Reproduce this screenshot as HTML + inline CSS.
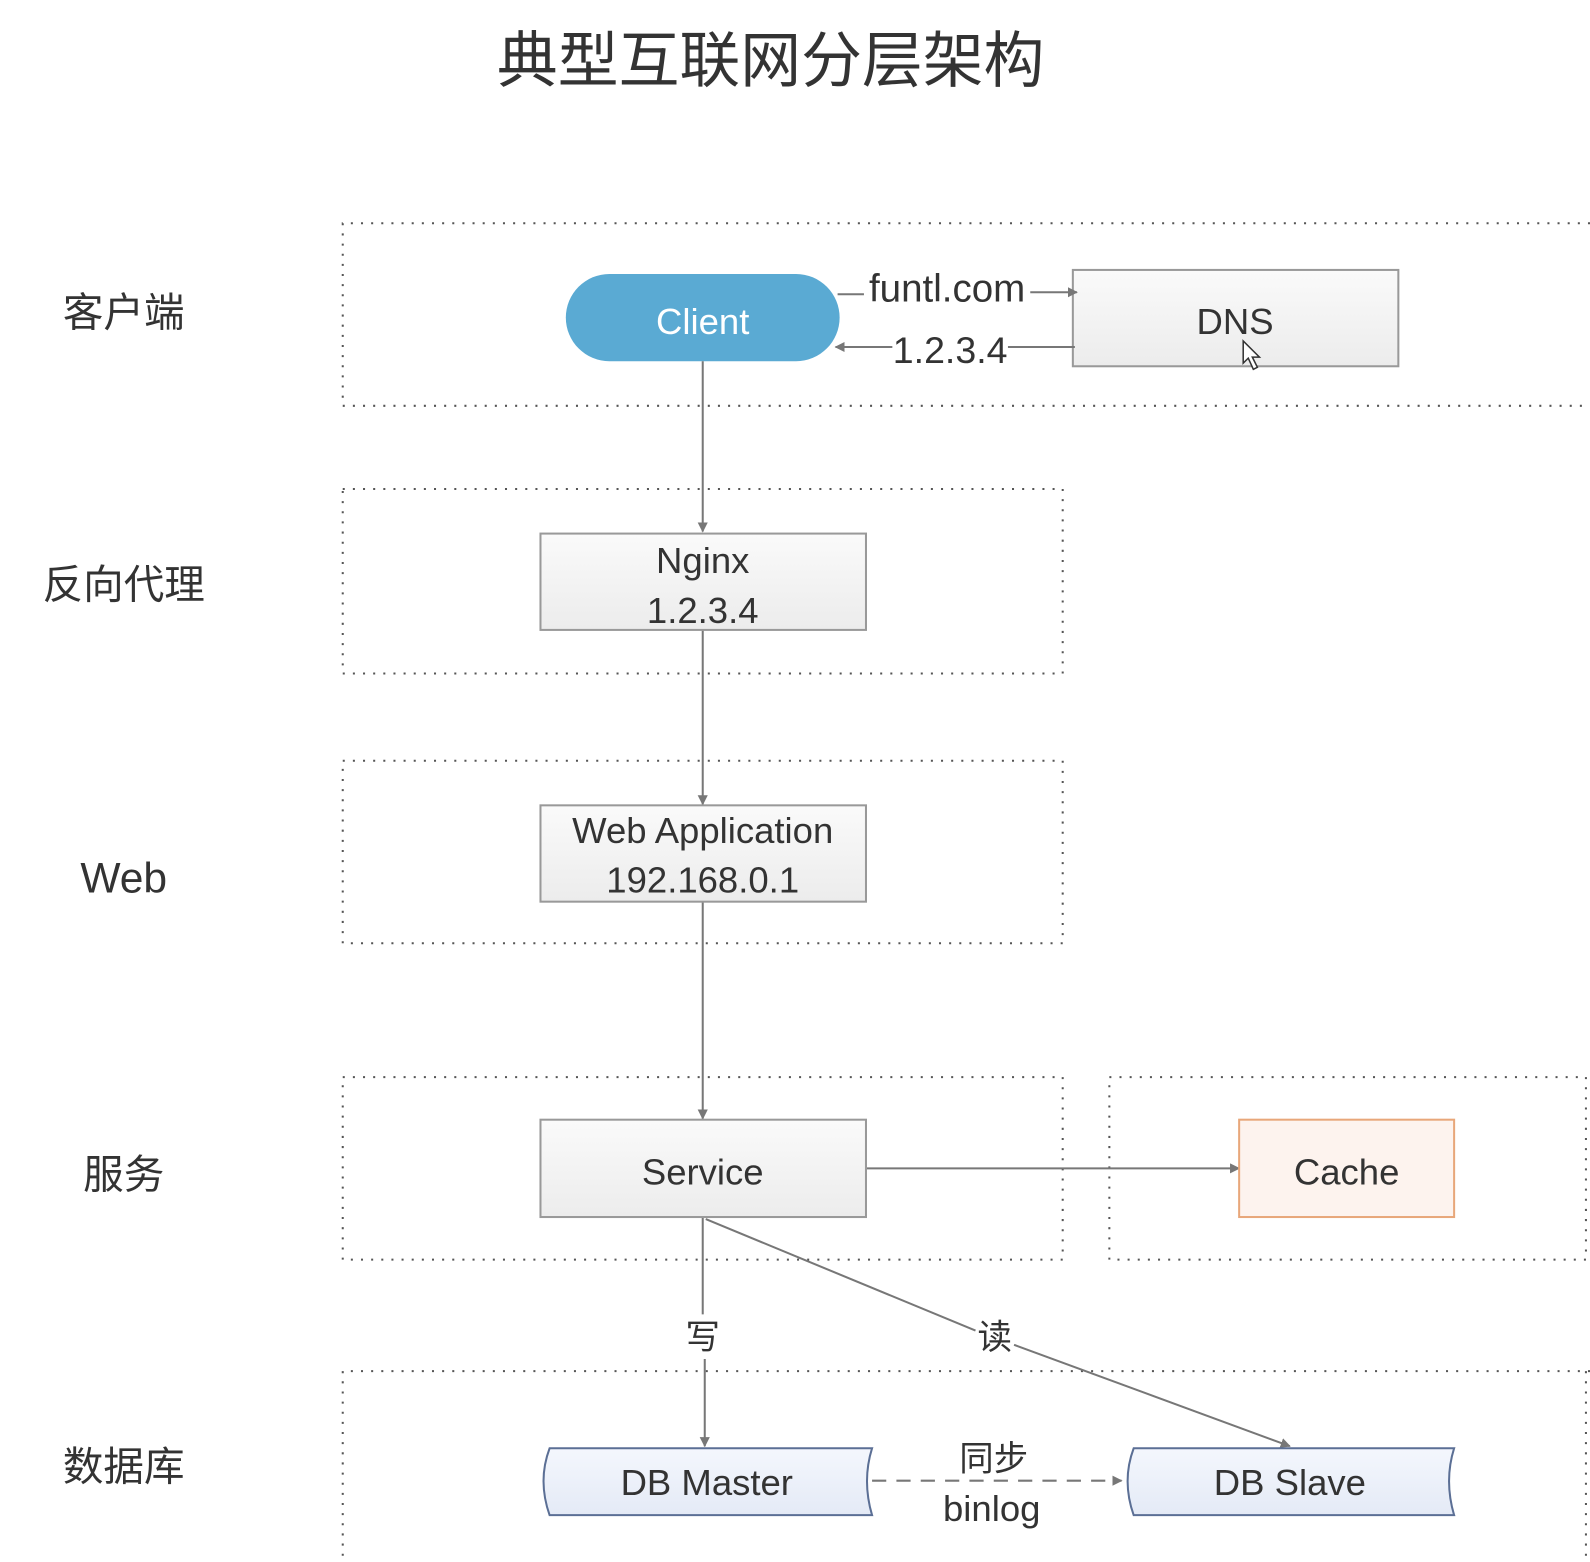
<!DOCTYPE html>
<html><head><meta charset="utf-8"><style>
html,body{margin:0;padding:0;background:#fff;width:1590px;height:1562px;overflow:hidden}
svg{display:block}
text{font-family:"Liberation Sans","Noto Sans CJK SC",sans-serif;fill:#333}
</style></head><body>
<svg width="1590" height="1562" viewBox="0 0 1568 1540" xmlns="http://www.w3.org/2000/svg">
<defs>
<marker id="a" markerWidth="10" markerHeight="10" refX="9" refY="5" orient="auto" markerUnits="userSpaceOnUse"><path d="M0,0 L10,5 L0,10 z" fill="#777"/></marker>
<linearGradient id="g" x1="0" y1="0" x2="0" y2="1"><stop offset="0" stop-color="#fafafa"/><stop offset="1" stop-color="#ececec"/></linearGradient>
<linearGradient id="b" x1="0" y1="0" x2="0" y2="1"><stop offset="0" stop-color="#f4f7fd"/><stop offset="1" stop-color="#e4eaf6"/></linearGradient>
</defs>
<text x="760" y="80" font-size="60" text-anchor="middle" fill="#333">典型互联网分层架构</text>
<g fill="none" stroke="#555" stroke-width="2" stroke-dasharray="2 8">
<path d="M1568,220 H338 V400 H1568"/>
<rect x="338" y="482" width="710" height="182"/>
<rect x="338" y="750" width="710" height="180"/>
<rect x="338" y="1062" width="710" height="180"/>
<rect x="1094" y="1062" width="470" height="180"/>
<path d="M1568,1352 H338 V1540"/>
<path d="M1564,1352 V1540"/>
</g>
<g font-size="40" text-anchor="middle" fill="#444">
<text x="122" y="322">客户端</text>
<text x="122" y="590">反向代理</text>
<text x="122" y="880" font-size="42">Web</text>
<text x="122" y="1172">服务</text>
<text x="122" y="1460">数据库</text>
</g>
<rect x="558" y="270" width="270" height="86" rx="43" fill="#5aaad3"/>
<text x="693" y="329" font-size="36" text-anchor="middle" style="fill:#fff">Client</text>
<rect x="1058" y="266" width="321" height="95" fill="url(#g)" stroke="#999" stroke-width="2"/>
<text x="1218" y="329" font-size="36" text-anchor="middle">DNS</text>
<path d="M1226,336 v22 l5,-5 l5,11 l4,-2 l-5,-10 h7 z" fill="#fff" stroke="#333" stroke-width="1.5"/>
<g stroke="#777" stroke-width="2" fill="none">
<path d="M826,290 H852"/><path d="M1016,288 H1062" marker-end="url(#a)"/>
<path d="M1060,342 H994"/><path d="M880,342 H824" marker-end="url(#a)"/>
<path d="M693,356 V524" marker-end="url(#a)"/>
<path d="M693,620 V793" marker-end="url(#a)"/>
<path d="M693,888 V1103" marker-end="url(#a)"/>
<path d="M855,1152 H1222" marker-end="url(#a)"/>
<path d="M693,1200 V1296"/><path d="M695,1340 V1426" marker-end="url(#a)"/>
<path d="M696,1202 L962,1312"/><path d="M1000,1326 L1272,1426" marker-end="url(#a)"/>
<path d="M860,1460 H1106" stroke-dasharray="14 10" marker-end="url(#a)"/>
</g>
<text x="934" y="297" font-size="38" text-anchor="middle">funtl.com</text>
<text x="937" y="358" font-size="37" text-anchor="middle">1.2.3.4</text>
<rect x="533" y="526" width="321" height="95" fill="url(#g)" stroke="#999" stroke-width="2"/>
<text x="693" y="565" font-size="36" text-anchor="middle">Nginx</text>
<text x="693" y="614" font-size="36" text-anchor="middle">1.2.3.4</text>
<rect x="533" y="794" width="321" height="95" fill="url(#g)" stroke="#999" stroke-width="2"/>
<text x="693" y="831" font-size="36" text-anchor="middle">Web Application</text>
<text x="693" y="880" font-size="36" text-anchor="middle">192.168.0.1</text>
<rect x="533" y="1104" width="321" height="96" fill="url(#g)" stroke="#999" stroke-width="2"/>
<text x="693" y="1168" font-size="36" text-anchor="middle">Service</text>
<rect x="1222" y="1104" width="212" height="96" fill="#fdf3ee" stroke="#e8a77a" stroke-width="2"/>
<text x="1328" y="1168" font-size="36" text-anchor="middle">Cache</text>
<text x="693" y="1330" font-size="34" text-anchor="middle">写</text>
<text x="981" y="1330" font-size="34" text-anchor="middle">读</text>
<path d="M542,1428 H860 Q850,1460 860,1494 H542 Q530,1460 542,1428 z" fill="url(#b)" stroke="#5b6f95" stroke-width="2"/>
<text x="697" y="1474" font-size="36" text-anchor="middle">DB Master</text>
<path d="M1118,1428 H1434 Q1424,1460 1434,1494 H1118 Q1106,1460 1118,1428 z" fill="url(#b)" stroke="#5b6f95" stroke-width="2"/>
<text x="1272" y="1474" font-size="36" text-anchor="middle">DB Slave</text>
<rect x="940" y="1418" width="80" height="34" fill="#fff"/>
<rect x="920" y="1466" width="116" height="36" fill="#fff"/>
<text x="980" y="1450" font-size="34" text-anchor="middle">同步</text>
<text x="978" y="1500" font-size="36" text-anchor="middle">binlog</text>
</svg>
</body></html>
